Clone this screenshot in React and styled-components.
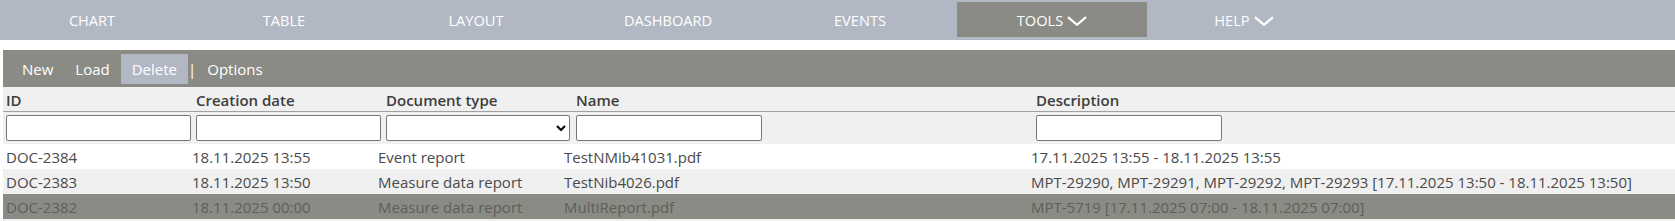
import React from 'react';
import styled, { createGlobalStyle } from 'styled-components';

const GlobalStyle = createGlobalStyle`
  html, body { margin: 0; padding: 0; background: #ffffff; }
  body { font-family: "Open Sans", "Noto Sans", sans-serif; font-size: 15px; }
  *, *::before, *::after { box-sizing: border-box; }
`;

const NavBar = styled.nav`
  height: 40px;
  background: #b1b8c4;
  display: flex;
  overflow: hidden;
`;

const NavList = styled.ul`
  list-style: none;
  margin: 0 0 0 -3px;
  padding: 0;
  display: flex;
  gap: 2px;
`;

const NavItem = styled.li`
  width: 190px;
  margin: 2px 0 3px;
  display: flex;
  align-items: center;
  justify-content: center;
  gap: 4px;
  color: #ffffff;
  font-size: 14.6px;
  text-transform: uppercase;
  background: ${(p) => (p.$active ? '#8b8b85' : 'transparent')};
`;

const Chevron = styled.svg`
  width: 20px;
  height: 10px;
  margin-top: 3px;
  flex: none;
`;

const Toolbar = styled.div`
  margin: 10px 0 0 3px;
  height: 37px;
  background: #8b8b85;
  display: flex;
  align-items: center;
  padding-left: 8px;
`;

const ToolButton = styled.button`
  height: 30px;
  padding: 0 11px;
  margin: 0;
  border: 0;
  background: ${(p) => (p.$active ? '#b1b8c4' : 'transparent')};
  color: #ffffff;
  font-family: inherit;
  font-size: 15px;
  cursor: pointer;
`;

const Separator = styled.span`
  color: #ffffff;
  font-size: 15px;
`;

const Table = styled.div`
  margin-left: 3px;
  background: #f0f0f0;
  padding-bottom: 10px;
`;

const HeaderRow = styled.div`
  display: grid;
  grid-template-columns: 190px 190px 190px 460px 1fr;
  height: 25px;
  padding-top: 2px;
  align-items: center;
  border-bottom: 1px solid #a0a0a0;
`;

const HeaderCell = styled.div`
  padding: 0 3px;
  font-weight: 600;
  color: #3d3d3d;
  white-space: nowrap;
`;

const FilterRow = styled.div`
  display: grid;
  grid-template-columns: 190px 190px 190px 460px 1fr;
  height: 32px;
  align-items: center;
`;

const FilterCell = styled.div`
  padding: 0 3px;
  display: flex;
  align-items: center;
`;

const FilterInput = styled.input`
  width: 186px;
  height: 26px;
  margin: 0;
  border: 1px solid #767676;
  border-radius: 2px;
  background: #ffffff;
  padding: 1px 3px;
  font-family: inherit;
  font-size: 14px;
`;

const FilterSelect = styled.select`
  width: 186px;
  height: 26px;
  margin: 0;
  border: 1px solid #767676;
  border-radius: 2px;
  background: #ffffff;
  color: #000;
  font-family: inherit;
  font-size: 14px;
`;

const rowBg = { white: '#ffffff', light: '#f0f0f0', selected: '#8b8b85' };

const DataRow = styled.div`
  display: grid;
  grid-template-columns: 186px 186px 186px 467px 1fr;
  height: 25px;
  align-items: center;
  background: ${(p) => rowBg[p.$tone]};
  color: ${(p) => (p.$tone === 'selected' ? '#5e5e5a' : '#4a4a4a')};
  white-space: nowrap;
`;

const DataCell = styled.div`
  padding: 0 3px;
  overflow: hidden;
`;

const navItems = [
  { label: 'Chart' },
  { label: 'Table' },
  { label: 'Layout' },
  { label: 'Dashboard' },
  { label: 'Events' },
  { label: 'Tools', dropdown: true, active: true },
  { label: 'Help', dropdown: true },
];

const rows = [
  {
    id: 'DOC-2384',
    date: '18.11.2025 13:55',
    type: 'Event report',
    name: 'TestNMib41031.pdf',
    desc: '17.11.2025 13:55 - 18.11.2025 13:55',
    tone: 'white',
  },
  {
    id: 'DOC-2383',
    date: '18.11.2025 13:50',
    type: 'Measure data report',
    name: 'TestNib4026.pdf',
    desc: 'MPT-29290, MPT-29291, MPT-29292, MPT-29293 [17.11.2025 13:50 - 18.11.2025 13:50]',
    tone: 'light',
  },
  {
    id: 'DOC-2382',
    date: '18.11.2025 00:00',
    type: 'Measure data report',
    name: 'MultiReport.pdf',
    desc: 'MPT-5719 [17.11.2025 07:00 - 18.11.2025 07:00]',
    tone: 'selected',
  },
];

function DownChevron() {
  return (
    <Chevron viewBox="0 0 20 10" aria-hidden="true">
      <polyline points="1,1.2 10,8.8 19,1.2" fill="none" stroke="#ffffff" strokeWidth="2.2" strokeLinejoin="miter" />
    </Chevron>
  );
}

export default function App() {
  return (
    <>
      <GlobalStyle />
      <NavBar>
        <NavList>
          {navItems.map((item) => (
            <NavItem key={item.label} $active={item.active}>
              <span>{item.label}</span>
              {item.dropdown && <DownChevron />}
            </NavItem>
          ))}
        </NavList>
      </NavBar>
      <Toolbar>
        <ToolButton>New</ToolButton>
        <ToolButton>Load</ToolButton>
        <ToolButton $active>Delete</ToolButton>
        <Separator>|</Separator>
        <ToolButton>Options</ToolButton>
      </Toolbar>
      <Table>
        <HeaderRow>
          <HeaderCell>ID</HeaderCell>
          <HeaderCell>Creation date</HeaderCell>
          <HeaderCell>Document type</HeaderCell>
          <HeaderCell>Name</HeaderCell>
          <HeaderCell>Description</HeaderCell>
        </HeaderRow>
        <FilterRow>
          <FilterCell><FilterInput type="text" /></FilterCell>
          <FilterCell><FilterInput type="text" /></FilterCell>
          <FilterCell>
            <FilterSelect defaultValue="">
              <option value=""></option>
              <option value="event">Event report</option>
              <option value="measure">Measure data report</option>
            </FilterSelect>
          </FilterCell>
          <FilterCell><FilterInput type="text" /></FilterCell>
          <FilterCell><FilterInput type="text" /></FilterCell>
        </FilterRow>
        {rows.map((r) => (
          <DataRow key={r.id} $tone={r.tone}>
            <DataCell>{r.id}</DataCell>
            <DataCell>{r.date}</DataCell>
            <DataCell>{r.type}</DataCell>
            <DataCell>{r.name}</DataCell>
            <DataCell>{r.desc}</DataCell>
          </DataRow>
        ))}
      </Table>
    </>
  );
}
